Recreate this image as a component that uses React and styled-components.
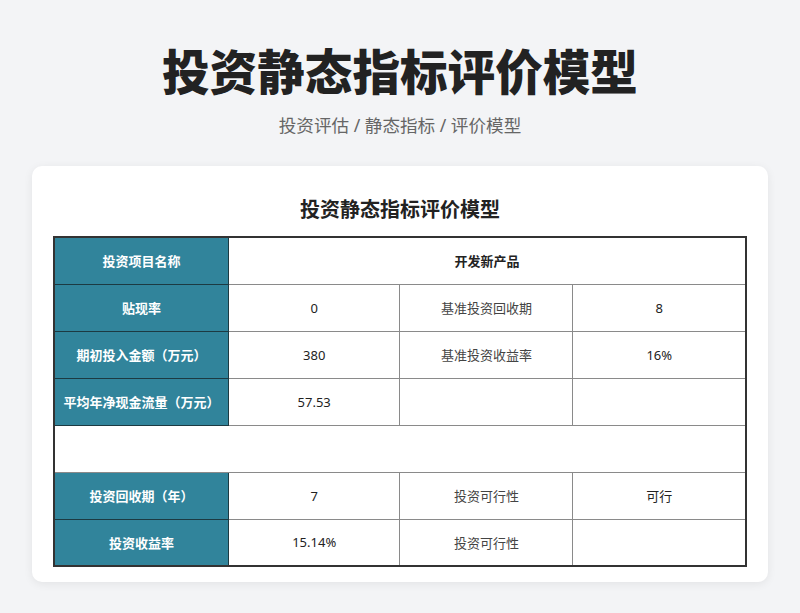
import React from 'react';
import styled, { createGlobalStyle } from 'styled-components';

const GlobalStyle = createGlobalStyle`
  html, body {
    margin: 0;
    padding: 0;
    background: #f3f4f6;
  }
  body {
    font-family: "Noto Sans", "Noto Sans CJK SC", sans-serif;
  }
`;

const Page = styled.div`
  width: 800px;
  min-height: 613px;
  padding-top: 39px;
  box-sizing: border-box;
`;

const Header = styled.header`
  display: flex;
  flex-direction: column;
  align-items: center;
`;

const Title = styled.h1`
  margin: 0;
  font-size: 47.6px;
  line-height: 66px;
  font-weight: 900;
  color: #222;
`;

const Subtitle = styled.div`
  margin-top: 7px;
  font-size: 17.6px;
  line-height: 26px;
  color: #666;
`;

const Card = styled.section`
  margin: 28px 32px 0;
  background: #fff;
  border-radius: 10px;
  box-shadow: 0 2px 10px rgba(0, 0, 0, 0.07);
  padding: 29px 21px 15px;
`;

const CardTitle = styled.h2`
  margin: 0 0 11px;
  text-align: center;
  font-size: 20px;
  line-height: 30px;
  font-weight: 700;
  color: #222;
`;

const Table = styled.table`
  width: 100%;
  border-collapse: collapse;
  table-layout: fixed;
  border: 2px solid #333;
  font-size: 13px;
`;

const Row = styled.tr`
  height: 47px;
`;

const Cell = styled.td`
  border: 1px solid #8a8a8a;
  text-align: center;
  vertical-align: middle;
  padding: 0;
  color: ${p => (p.$muted ? '#444' : '#222')};
  font-weight: ${p => (p.$bold ? 700 : 400)};
`;

const Label = styled.td`
  background: #31849b;
  border: 1px solid #1c3a42;
  color: #fff;
  font-weight: 700;
  text-align: center;
  vertical-align: middle;
  padding: 0;
`;

const rows = [
  ['贴现率', '0', '基准投资回收期', '8'],
  ['期初投入金额（万元）', '380', '基准投资收益率', '16%'],
  ['平均年净现金流量（万元）', '57.53', '', ''],
];

const results = [
  ['投资回收期（年）', '7', '投资可行性', '可行'],
  ['投资收益率', '15.14%', '投资可行性', ''],
];

const DataRow = ({ r }) => (
  <Row>
    <Label>{r[0]}</Label>
    <Cell>{r[1]}</Cell>
    <Cell $muted>{r[2]}</Cell>
    <Cell>{r[3]}</Cell>
  </Row>
);

export default function App() {
  return (
    <Page>
      <GlobalStyle />
      <Header>
        <Title>投资静态指标评价模型</Title>
        <Subtitle>投资评估 / 静态指标 / 评价模型</Subtitle>
      </Header>
      <Card>
        <CardTitle>投资静态指标评价模型</CardTitle>
        <Table>
          <colgroup>
            <col style={{ width: '25.2%' }} />
            <col style={{ width: '24.8%' }} />
            <col style={{ width: '25%' }} />
            <col style={{ width: '25%' }} />
          </colgroup>
          <tbody>
            <Row>
              <Label>投资项目名称</Label>
              <Cell colSpan={3} $bold>开发新产品</Cell>
            </Row>
            {rows.map((r, i) => <DataRow key={i} r={r} />)}
            <Row>
              <Cell colSpan={4} />
            </Row>
            {results.map((r, i) => <DataRow key={i} r={r} />)}
          </tbody>
        </Table>
      </Card>
    </Page>
  );
}
